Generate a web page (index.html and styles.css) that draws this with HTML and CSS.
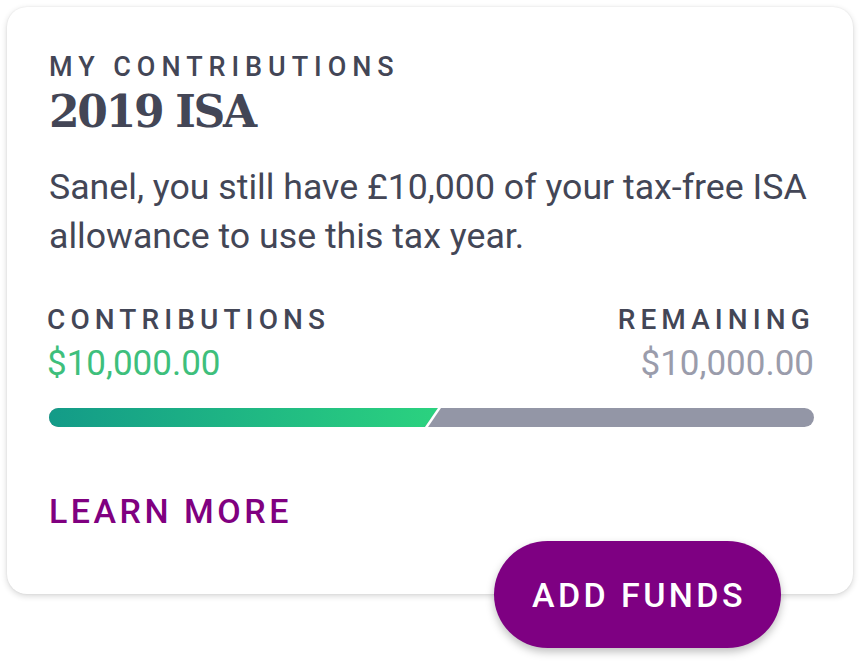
FILE: index.html
```html
<!DOCTYPE html>
<html>
<head>
<meta charset="utf-8">
<link rel="stylesheet" href="styles.css">
</head>
<body>
<div class="card">
  <div class="eyebrow">MY CONTRIBUTIONS</div>
  <h1 class="title">2019 ISA</h1>
  <p class="desc">Sanel, you still have £10,000 of your tax-free ISA allowance to use this tax year.</p>
  <div class="stats">
    <div class="stat">
      <div class="label">CONTRIBUTIONS</div>
      <div class="value green">$10,000.00</div>
    </div>
    <div class="stat right">
      <div class="label">REMAINING</div>
      <div class="value grey">$10,000.00</div>
    </div>
  </div>
  <div class="bar">
    <div class="fill"></div>
  </div>
  <a class="learn">LEARN MORE</a>
  <button class="fab">ADD FUNDS</button>
</div>
</body>
</html>
```
FILE: styles.css
```css
html, body { margin: 0; padding: 0; background: #fff; }
body { font-family: Roboto, "Noto Sans", sans-serif; color: #434656; min-height: 666px; }
.card {
  position: relative;
  box-sizing: border-box;
  margin: 7px 0 0 7px;
  width: 846px;
  height: 587px;
  border-radius: 20px;
  background: #fff;
  box-shadow: 0 2px 6px rgba(0,0,0,0.16), 0 0 2px rgba(0,0,0,0.08);
  padding: 44px 39px 0 42px;
}
.eyebrow {
  font-size: 27px;
  letter-spacing: 5.95px;
  line-height: 32px;
  font-weight: 500;
}
.title {
  margin: 4px 0 0;
  font-family: "DejaVu Serif", serif;
  font-weight: bold;
  font-size: 44px;
  letter-spacing: -2.3px;
  line-height: 50px;
  color: #434656;
}
.desc {
  margin: 26px 0 0;
  font-size: 35.7px;
  line-height: 49px;
  color: #434656;
}
.stats {
  display: flex;
  justify-content: space-between;
  margin-top: 43px;
}
.stat.right { text-align: right; }
.label {
  font-size: 28px;
  letter-spacing: 5.1px;
  font-weight: 500;
  line-height: 32px;
}
.stat:first-child .label { margin-left: -2px; }
.stat:first-child .value { margin-left: -2px; }
.stat.right .label { margin-right: -1px; }
.value {
  font-size: 35px;
  line-height: 40px;
  margin-top: 8px;
}
.green { color: #3ebf7c; }
.grey { color: #9a9cab; }
.bar {
  position: relative;
  margin-top: 24px;
  height: 19px;
  border-radius: 10px;
  background: #9396a6;
  overflow: hidden;
}
.fill {
  height: 100%;
  width: 389px;
  background: linear-gradient(90deg, #139b88 0%, #2bd27f 100%);
  clip-path: polygon(0 0, 100% 0, calc(100% - 13px) 100%, 0 100%);
}
.bar::after {
  content: "";
  position: absolute;
  top: 0;
  left: 376px;
  width: 16px;
  height: 100%;
  background: #fff;
  clip-path: polygon(13px 0, 16px 0, 3px 100%, 0 100%);
}
.learn {
  display: block;
  margin-top: 64px;
  font-size: 34px;
  letter-spacing: 3.5px;
  color: #800080;
  line-height: 40px;
  font-weight: 500;
}
.fab {
  position: absolute;
  left: 487px;
  top: 534px;
  width: 287px;
  height: 107px;
  border: none;
  border-radius: 54px;
  background: #7e0082;
  color: #fff;
  font-family: Roboto, "Noto Sans", sans-serif;
  font-size: 34px;
  letter-spacing: 3.4px;
  font-weight: 500;
  box-shadow: 0 4px 8px rgba(0,0,0,0.25);
  padding: 0 0 0 3px;
}
```
